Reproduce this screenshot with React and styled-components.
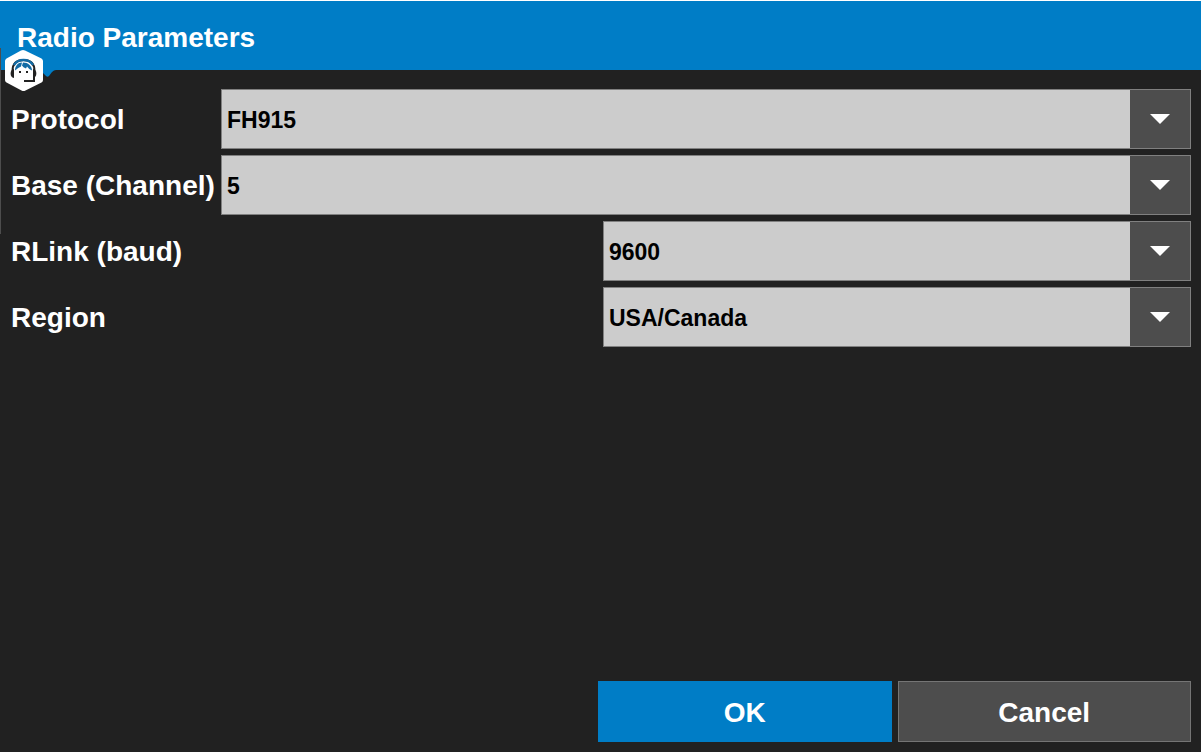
import React from "react";
import styled, { createGlobalStyle } from "styled-components";

const GlobalStyle = createGlobalStyle`
  *, *::before, *::after { box-sizing: border-box; }
  body {
    margin: 0;
    background: #212121;
    color: #fff;
    font-family: "Liberation Sans", Arial, sans-serif;
    font-weight: 700;
  }
`;

const Screen = styled.main`
  display: flex;
  flex-direction: column;
  min-height: 100vh;
  border-top: 1px solid #fff;
  background: #212121;
`;

const Header = styled.header`
  position: relative;
  display: flex;
  align-items: center;
  height: 69px;
  padding: 4px 17px 0;
  background: #007dc6;
`;

const Title = styled.h1`
  margin: 0;
  font-size: 28px;
  line-height: 32px;
`;

const DrawerEdge = styled.span`
  position: absolute;
  left: 0;
  top: 47px;
  width: 1px;
  height: 186px;
  background: #4d4d4d;
`;

const SupportButton = styled.button`
  position: absolute;
  left: 0;
  top: 47px;
  width: 56px;
  height: 46px;
  padding: 0;
  border: 0;
  background: none;
  cursor: pointer;

  svg { display: block; }
`;

const Form = styled.form`
  flex: 1;
  display: flex;
  flex-direction: column;
  padding: 19px 10px 10px 11px;
`;

const Fields = styled.div`
  display: flex;
  flex-direction: column;
  gap: 6px;
`;

const Field = styled.div`
  display: grid;
  grid-template-columns: ${(p) => (p.$half ? "1fr 1fr" : "206px 1fr")};
  column-gap: 4px;
  align-items: center;
`;

const Label = styled.label`
  padding-top: 2px;
  font-size: 28px;
  line-height: 32px;
  white-space: nowrap;
`;

const SelectBox = styled.div`
  display: grid;
  grid-template-columns: 1fr 60px;
  height: 60px;
  border: 1px solid #808080;
  background: #4d4d4d;
`;

const Select = styled.select`
  grid-area: 1 / 1 / 2 / 3;
  appearance: none;
  width: 100%;
  height: 100%;
  padding: 2px 66px 0 5px;
  border: 0;
  border-radius: 0;
  background: linear-gradient(#cccccc, #cccccc) left / calc(100% - 60px) 100% no-repeat;
  color: #000;
  font: 700 23px/26px "Liberation Sans", Arial, sans-serif;
`;

const Arrow = styled.svg`
  grid-area: 1 / 2;
  align-self: center;
  justify-self: center;
  pointer-events: none;
`;

const Actions = styled.footer`
  display: grid;
  grid-template-columns: 1fr 1fr;
  gap: 6px;
  width: calc(50% + 3px);
  margin: auto 0 0 auto;
`;

const Button = styled.button`
  height: 61px;
  padding: 2px 0 0;
  border: 1px solid ${(p) => (p.$primary ? "#007dc6" : "#757575")};
  background: ${(p) => (p.$primary ? "#007dc6" : "#4d4d4d")};
  color: #fff;
  font: 700 28px/32px "Liberation Sans", Arial, sans-serif;
`;

const fields = [
  { id: "protocol", label: "Protocol", value: "FH915" },
  { id: "channel", label: "Base (Channel)", value: "5" },
  { id: "rlink", label: "RLink (baud)", value: "9600", half: true },
  { id: "region", label: "Region", value: "USA/Canada", half: true },
];

function SupportIcon() {
  return (
    <svg width="56" height="46" viewBox="0 48 56 46" aria-hidden="true">
      <path d="M38 69H56V70Q54 70 52 72L49 76Q47.500 77.500 46 76L42 72z" fill="#007dc6" />
      <path d="M25 50.500L41.500 58.500Q43 59.500 43 61V80Q43 81.500 41.500 82.500L25.500 90.500Q23.500 91.500 21.500 90.500L6.500 82.500Q5 81.500 5 80V61Q5 59.500 6.500 58.500L21 50.500Q23 49.500 25 50.500z" fill="#fff" />
      <path d="M12.500 71C12.500 64 16 60 23.500 60S34.500 64 34.500 71" fill="none" stroke="#212121" strokeWidth="2" />
      <path d="M14 65C16 61.500 19 60 23.500 60S31 61.500 33 65" fill="none" stroke="#126ba5" strokeWidth="2.500" />
      <path d="M15 70.500C15 66 18 62.500 22 62.500L21 66.500Q18.500 67.500 15 70.500zM23 62.500C28 62.500 32 66 32 70.500Q29 69.500 27 66.500L26 68.500Q23 67.500 22 65.500z" fill="#126ba5" />
      <path d="M14 69V78C9.500 78 9.500 69 14 69zM33 69V78C37.500 78 37.500 69 33 69z" fill="#212121" />
      <path d="M34 76V81H24" fill="none" stroke="#212121" strokeWidth="2" />
      <path d="M19 71h2v2h-2zM26 71h2v2h-2z" fill="#212121" />
    </svg>
  );
}

function SelectField({ id, label, value, half }) {
  return (
    <Field $half={half}>
      <Label htmlFor={id}>{label}</Label>
      <SelectBox>
        <Select id={id} defaultValue={value}>
          <option>{value}</option>
        </Select>
        <Arrow width="20" height="12" viewBox="0 0 20 12" aria-hidden="true">
          <path d="M0 1H20L10 11z" fill="#fff" />
        </Arrow>
      </SelectBox>
    </Field>
  );
}

export default function App() {
  return (
    <>
      <GlobalStyle />
      <Screen>
        <Header>
          <Title>Radio Parameters</Title>
          <DrawerEdge />
          <SupportButton type="button" aria-label="Support">
            <SupportIcon />
          </SupportButton>
        </Header>
        <Form onSubmit={(e) => e.preventDefault()}>
          <Fields>
            {fields.map((f) => (
              <SelectField key={f.id} {...f} />
            ))}
          </Fields>
          <Actions>
            <Button type="submit" $primary>OK</Button>
            <Button type="button">Cancel</Button>
          </Actions>
        </Form>
      </Screen>
    </>
  );
}
